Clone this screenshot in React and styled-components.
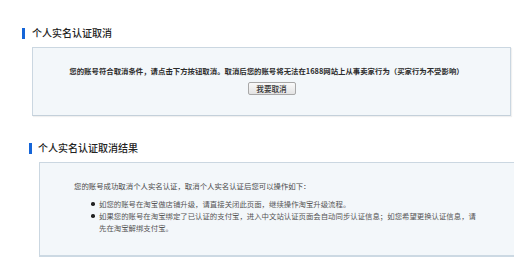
import React from "react";
import styled, { createGlobalStyle } from "styled-components";

const Global = createGlobalStyle`
  html, body { margin: 0; padding: 0; background: #fff; overflow: hidden; }
  body { font-family: "Noto Sans CJK SC", "Noto Sans", sans-serif; width: 514px; height: 263px; }
`;

const Page = styled.div`
  display: flex;
  flex-direction: column;
  padding-top: 26px;
  width: 514px;
  overflow: hidden;
`;

const Section = styled.section`
  display: flex;
  flex-direction: column;
  padding-left: ${(p) => p.$indent}px;
  margin-top: ${(p) => p.$top || 0}px;
`;

const Heading = styled.h2`
  display: flex;
  align-items: center;
  gap: ${(p) => p.$gap}px;
  margin: 0;
  height: 14px;
  font-size: 10px;
  line-height: 14px;
  font-weight: 500;
  color: #222;
  white-space: nowrap;
  &::before {
    content: "";
    width: 3px;
    height: 11px;
    background: #1565d8;
    flex: none;
  }
`;

const Panel = styled.div`
  box-sizing: border-box;
  margin-top: 7px;
  margin-left: ${(p) => p.$offset}px;
  width: ${(p) => p.$width}px;
  flex: none;
  background: #f3f7fa;
  border: 1px solid #cbd7e1;
  border-bottom-width: ${(p) => (p.$thick ? 2 : 1)}px;
  border-bottom-color: ${(p) => (p.$thick ? "#ccd9e3" : "#c4d0da")};
  font-size: 7.4px;
  line-height: 12px;
  color: #555;
`;

const CancelPanel = styled(Panel)`
  display: flex;
  flex-direction: column;
  align-items: center;
  padding: 17px 0 20px;
  box-shadow: 1px 1px 1px rgba(0, 0, 0, 0.06);
`;

const ResultPanel = styled(Panel)`
  padding: 17px 0 21px 34px;
`;

const Notice = styled.p`
  margin: 0;
  height: 12px;
  color: #2b2b2b;
  font-weight: 700;
  white-space: nowrap;
  transform: translateX(-5px);
`;

const Button = styled.button`
  box-sizing: border-box;
  margin-top: 5px;
  height: 13px;
  width: 48px;
  padding: 0;
  font-family: inherit;
  font-size: 7.6px;
  line-height: 11px;
  font-weight: 500;
  color: #333;
  background: linear-gradient(#fafafa, #e3e3e3);
  border: 1px solid #a8a8a8;
  border-radius: 2px;
`;

const Lead = styled.p`
  margin: 0;
  color: #4a4a4a;
  white-space: nowrap;
`;

const List = styled.ul`
  list-style: none;
  margin: 6px 0 0;
  padding: 0 0 0 25px;
  width: 381px;
`;

const Item = styled.li`
  position: relative;
  color: #555;
  &::before {
    content: "";
    position: absolute;
    left: -8px;
    top: 4px;
    width: 3.5px;
    height: 3.5px;
    border-radius: 50%;
    background: #222;
  }
`;

export default function App() {
  return (
    <>
      <Global />
      <Page>
        <Section $indent={22}>
          <Heading $gap={7}>个人实名认证取消</Heading>
          <CancelPanel $offset={10} $width={479}>
            <Notice>
              您的账号符合取消条件，请点击下方按钮取消。取消后您的账号将无法在1688网站上从事卖家行为（买家行为不受影响）
            </Notice>
            <Button>我要取消</Button>
          </CancelPanel>
        </Section>
        <Section $indent={29} $top={25}>
          <Heading $gap={6}>个人实名认证取消结果</Heading>
          <ResultPanel $offset={10} $width={490} $thick>
            <Lead>您的账号成功取消个人实名认证，取消个人实名认证后您可以操作如下：</Lead>
            <List>
              <Item>如您的账号在淘宝做店铺升级，请直接关闭此页面，继续操作淘宝升级流程。</Item>
              <Item>
                如果您的账号在淘宝绑定了已认证的支付宝，进入中文站认证页面会自动同步认证信息；如您希望更换认证信息，请先在淘宝解绑支付宝。
              </Item>
            </List>
          </ResultPanel>
        </Section>
      </Page>
    </>
  );
}
